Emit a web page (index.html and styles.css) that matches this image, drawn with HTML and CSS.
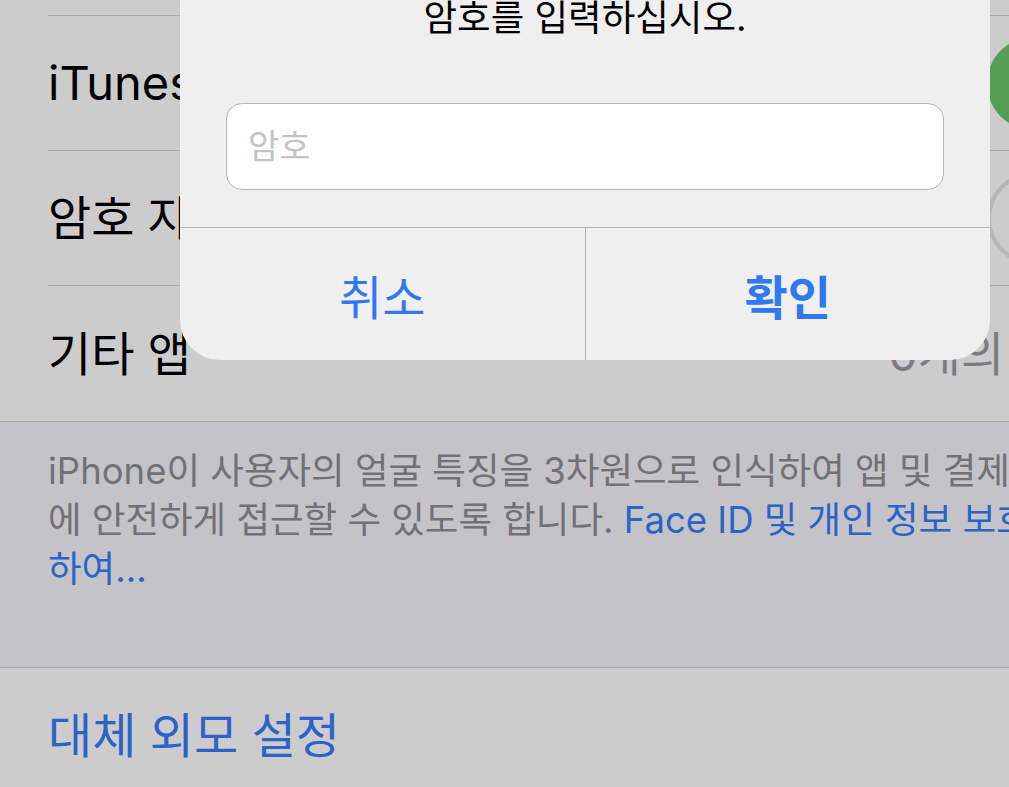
FILE: index.html
```html
<!DOCTYPE html>
<html lang="ko">
<head>
    <meta charset="UTF-8">
    <meta name="viewport" content="width=device-width, initial-scale=1.0">
    <title>Face ID 및 암호</title>
    <link rel="stylesheet" href="styles.css">
</head>
<body>

<div class="screen">
    <!-- Settings list (dimmed behind the alert) -->
    <div class="group">
        <div class="row">
            <div class="row-inner"><span class="label">iPhone 잠금 해제</span></div>
        </div>
        <div class="row">
            <div class="row-inner">
                <span class="label">iTunes 및 App Store</span>
                <span class="toggle on"><span class="knob"></span></span>
            </div>
        </div>
        <div class="row">
            <div class="row-inner">
                <span class="label">암호 자동 완성</span>
                <span class="toggle off"><span class="knob"></span></span>
            </div>
        </div>
        <div class="row last">
            <div class="row-inner">
                <span class="label">기타 앱</span>
                <span class="value">0개의 앱 <span class="chevron">›</span></span>
            </div>
        </div>
    </div>

    <div class="footer-note">
        iPhone이 사용자의 얼굴 특징을 3차원으로 인식하여 앱 및 결제<br>
        에 안전하게 접근할 수 있도록 합니다. <span class="link">Face ID 및 개인 정보 보호에 관</span><br>
        <span class="link">하여...</span>
    </div>

    <div class="group bordered">
        <div class="row last">
            <div class="row-inner"><span class="label link">대체 외모 설정</span></div>
        </div>
    </div>
</div>

<!-- Password alert -->
<div class="alert">
    <div class="alert-body">
        <div class="alert-title">Face ID</div>
        <div class="alert-message">암호를 입력하십시오.</div>
        <div class="alert-input">
            <input type="password" placeholder="암호">
        </div>
    </div>
    <div class="alert-actions">
        <button class="alert-btn">취소</button>
        <button class="alert-btn primary">확인</button>
    </div>
</div>

</body>
</html>
```

FILE: styles.css
```css
body {
    margin: 0;
    width: 1009px;
    height: 787px;
    overflow: hidden;
    position: relative;
    background-color: #c4c4c8;
    font-family: 'Inter', 'Noto Sans CJK KR', sans-serif;
    color: #000;
}
.screen {
    width: 1188px;
    margin-top: -119px;
}
.group {
    background-color: #cccccc;
}
.group.bordered {
    border-top: 1px solid #a9a9ac;
}
.row {
    padding-left: 48px;
}
.row-inner {
    height: 135px;
    box-sizing: border-box;
    border-bottom: 1px solid #a9a9ac;
    padding-right: 48px;
    display: flex;
    align-items: center;
    justify-content: space-between;
    white-space: nowrap;
}
.row.last {
    border-bottom: 1px solid #a9a9ac;
}
.row.last .row-inner {
    border-bottom: none;
}
.label {
    font-size: 47px;
    line-height: 56px;
}
.link.label {
    font-size: 48px;
}
.value {
    font-size: 47px;
    line-height: 56px;
    color: #7c7c80;
}
.chevron {
    margin-left: 48px;
}
.toggle {
    flex-shrink: 0;
    width: 153px;
    height: 93px;
    border-radius: 47px;
    box-sizing: border-box;
    display: flex;
    align-items: center;
    padding: 0 6px;
}
.toggle.on {
    background-color: #539d55;
    justify-content: flex-end;
}
.toggle.off {
    border: 4px solid #b6b6b8;
}
.knob {
    width: 81px;
    height: 81px;
    border-radius: 50%;
    background-color: #cccccc;
}
.footer-note {
    height: 245px;
    box-sizing: border-box;
    padding: 25px 0 0 48px;
    font-size: 36.5px;
    line-height: 49px;
    color: #717176;
    white-space: nowrap;
}
.link {
    color: #2c63c6;
}
.alert {
    position: absolute;
    left: 180px;
    top: -68px;
    width: 810px;
    background-color: #efefef;
    border-radius: 40px;
    overflow: hidden;
}
.alert-body {
    padding: 0 46px 37px;
    text-align: center;
}
.alert-title {
    height: 66px;
    font-size: 36px;
    line-height: 66px;
    font-weight: bold;
}
.alert-message {
    font-size: 36.5px;
    line-height: 40px;
}
.alert-input {
    margin-top: 65px;
}
.alert-input input {
    display: block;
    width: 100%;
    height: 87px;
    box-sizing: border-box;
    border: 1px solid #b5b5b7;
    border-radius: 16px;
    background-color: #fff;
    padding: 0 21px;
    font-family: 'Inter', 'Noto Sans CJK KR', sans-serif;
    font-size: 34px;
    outline: none;
}
.alert-input input::placeholder {
    color: #c4c4c6;
}
.alert-actions {
    display: flex;
    border-top: 1px solid #b5b5b7;
}
.alert-btn {
    flex: 1;
    height: 132px;
    background: none;
    border: none;
    font-family: 'Inter', 'Noto Sans CJK KR', sans-serif;
    font-size: 47px;
    color: #2f78ee;
    padding: 0;
    cursor: pointer;
}
.alert-btn + .alert-btn {
    border-left: 1px solid #b5b5b7;
}
.alert-btn.primary {
    font-weight: bold;
}
```
